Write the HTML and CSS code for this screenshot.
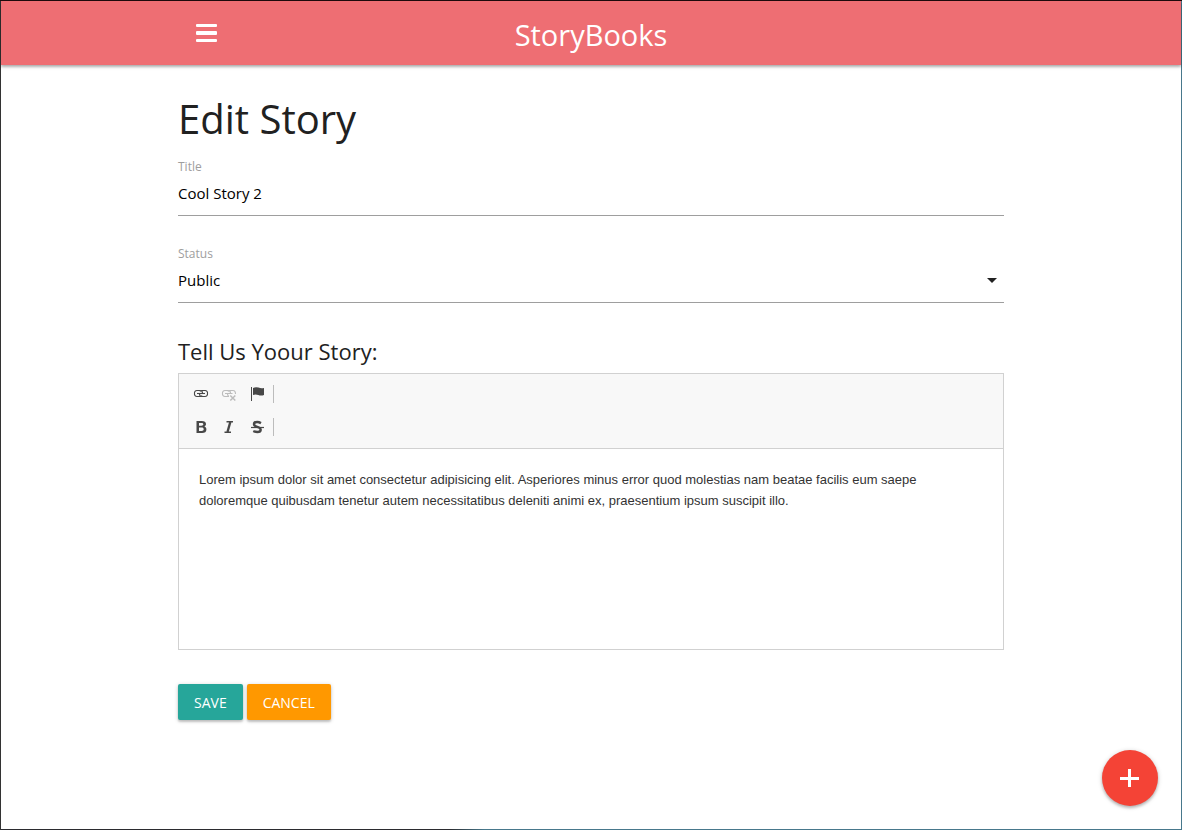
FILE: index.html
```html
<!DOCTYPE html>
<html lang="en">
<head>
<meta charset="utf-8">
<meta name="viewport" content="width=device-width, initial-scale=1">
<title>StoryBooks</title>
<link rel="stylesheet" href="styles.css">
</head>
<body>
<div class="window">
  <header class="navbar">
    <nav class="container navbar-inner">
      <button class="menu-button" type="button" aria-label="Menu">
        <svg width="21" height="18" viewBox="0 0 21 18" fill="currentColor"><rect width="21" height="3" rx="1"/><rect y="7" width="21" height="4" rx="1"/><rect y="15" width="21" height="3" rx="1"/></svg>
      </button>
      <a class="brand" href="#">StoryBooks</a>
    </nav>
  </header>
  <main class="container content">
    <h1 class="page-title">Edit Story</h1>
    <form>
      <div class="field">
        <label class="field-label" for="title">Title</label>
        <input class="field-control" id="title" type="text" value="Cool Story 2">
      </div>
      <div class="field">
        <label class="field-label" for="status">Status</label>
        <div class="select-wrap">
          <select class="field-control" id="status">
            <option selected>Public</option>
            <option>Private</option>
            <option>Unpublished</option>
          </select>
          <svg class="caret" width="10" height="5" viewBox="0 0 10 5" fill="currentColor"><path d="M0 0h10L5 5z"/></svg>
        </div>
      </div>
      <h2 class="section-title" id="story-heading">Tell Us Yoour Story:</h2>
      <div class="editor">
        <div class="toolbar">
          <div class="toolbar-row">
            <button class="tool" type="button" aria-label="Link">
              <svg width="16" height="16" viewBox="0 0 16 16" fill="none" stroke="currentColor" stroke-width="1.1"><path d="M9 9.500q-.4 1-2 1H4a2.500 2.500 0 0 1-2.500-3A2.500 2.500 0 0 1 4 4.500h3q2.500 0 2.500 2.500M7 5.500q.4-1 2-1h3a2.500 2.500 0 0 1 2.500 3 2.500 2.500 0 0 1-2.500 3H9q-2.500 0-2.500-2.500"/><path d="M4 7.500h8"/></svg>
            </button>
            <button class="tool" type="button" aria-label="Unlink" disabled>
              <svg width="16" height="16" viewBox="0 0 16 16" fill="none" stroke="currentColor" stroke-width="1.100"><path d="M8 10.500H4a2.500 2.500 0 0 1-2.500-3A2.500 2.500 0 0 1 4 4.500h3q2.500 0 2.500 2.500M7 5.500q.4-1 2-1h3q2.500 0 2.500 3.500M6.500 8q.2 2 1.500 2.300M4 7.500h7.500"/><path d="M9.300 9.500l5 5M14.300 9.500l-5 5" stroke-width="1.500"/></svg>
            </button>
            <button class="tool" type="button" aria-label="Anchor">
              <svg width="16" height="16" viewBox="0 0 16 16" fill="currentColor"><path d="M2 1h1v14H2zM4 2q3-1.500 5.500-.4T15 2v7q-3 1-5.700 0T4 9z"/></svg>
            </button>
            <span class="separator"></span>
          </div>
          <div class="toolbar-row">
            <button class="tool" type="button" aria-label="Bold">
              <svg width="16" height="16" viewBox="0 0 16 16" fill="currentColor" fill-rule="evenodd"><path d="M3.500 2h5.200c2.800 0 4.300 1 4.300 3 0 1.300-.7 2.200-1.900 2.500v.1c1.500.3 2.300 1.300 2.300 2.800 0 2.200-1.600 3.600-4.300 3.600H3.500zM6 4v2.700h2.300c1.400 0 2-.4 2-1.400S9.700 4 8.300 4zM6 8.600V12h2.600c1.400 0 2.100-.6 2.100-1.700s-.7-1.700-2.200-1.700z"/></svg>
            </button>
            <button class="tool" type="button" aria-label="Italic">
              <svg width="16" height="16" viewBox="0 0 16 16" fill="none" stroke="currentColor"><path d="M5.500 2.800h6.500M3.500 13.200H10" stroke-width="1.500"/><path d="M9.300 3L6.500 13" stroke-width="2.400"/></svg>
            </button>
            <button class="tool" type="button" aria-label="Strikethrough">
              <svg width="16" height="16" viewBox="0 0 16 16" fill="none" stroke="currentColor"><path d="M12 4.100Q10 3 8.200 3 5 3 5 5.200 5 7 8.300 7.800T11.700 10.700Q11.700 13 8.300 13 6.200 13 4.300 12" stroke-width="2.400"/><path d="M2 8.500h13" stroke-width="1.200"/></svg>
            </button>
            <span class="separator"></span>
          </div>
        </div>
        <div class="editor-body" contenteditable="true" role="textbox" aria-multiline="true" aria-labelledby="story-heading" spellcheck="false">Lorem ipsum dolor sit amet consectetur adipisicing elit. Asperiores minus error quod molestias nam beatae facilis eum saepe doloremque quibusdam tenetur autem necessitatibus deleniti animi ex, praesentium ipsum suscipit illo.</div>
      </div>
      <div class="actions">
        <button class="btn btn-save" type="submit">SAVE</button>
        <a class="btn btn-cancel" href="#">CANCEL</a>
      </div>
    </form>
  </main>
  <button class="fab" type="button" aria-label="Add story">
    <svg width="20" height="20" viewBox="0 0 20 20" fill="currentColor"><path d="M8 1h3v8h8v3h-8v7H8v-7H0V9h8z"/></svg>
  </button>
</div>
</body>
</html>
```
FILE: styles.css
```css
* {
  box-sizing: border-box;
}

body {
  margin: 0;
  background: #fff;
  color: #212121;
  font-family: "Segoe UI", "Open Sans", "Noto Sans", sans-serif;
  font-size: 15px;
  line-height: 24px;
}

.window {
  min-height: 100vh;
  padding: 1px;
  background:
    linear-gradient(#200a0c, #200a0c) top / 100% 1px no-repeat,
    linear-gradient(#47788c, #47788c) right / 1px 100% no-repeat,
    linear-gradient(#333, #333) left / 1px 100% no-repeat,
    linear-gradient(to right, #2b2b2f 38%, #47788c 41%) bottom / 100% 1px no-repeat;
}

.container {
  width: 70%;
  margin: 0 auto;
}

.navbar {
  background: #ee6e73;
  color: #fff;
  box-shadow: 0 2px 2px rgba(0, 0, 0, 0.14), 0 1px 4px rgba(0, 0, 0, 0.3);
}

.navbar-inner {
  display: grid;
  grid-template-columns: 1fr auto 1fr;
  align-items: center;
  height: 64px;
}

.menu-button {
  display: flex;
  justify-self: start;
  padding: 0 18px;
  border: 0;
  background: none;
  color: inherit;
}

.brand {
  padding-top: 4px;
  color: inherit;
  font-size: 29px;
  line-height: 60px;
  text-decoration: none;
}

.content {
  padding-bottom: 40px;
}

.page-title {
  margin: 30px 0 16px;
  font-size: 40px;
  font-weight: 400;
  line-height: 48px;
}

.field {
  margin-bottom: 30px;
}

.field-label {
  display: block;
  color: #9e9e9e;
  font-size: 12px;
  line-height: 16px;
}

.field-control {
  display: block;
  width: 100%;
  height: 41px;
  padding: 0 0 5px;
  border: 0;
  border-bottom: 1px solid #9e9e9e;
  border-radius: 0;
  outline: 0;
  appearance: none;
  background: transparent;
  color: #000;
  font-family: inherit;
  font-size: 15px;
}

.select-wrap {
  position: relative;
}

.caret {
  position: absolute;
  top: 16px;
  right: 7px;
  pointer-events: none;
}

.section-title {
  margin: 33px 0 7px;
  font-size: 22px;
  font-weight: 400;
  line-height: 30px;
}

.editor {
  border: 1px solid #d1d1d1;
}

.toolbar {
  display: flex;
  flex-direction: column;
  gap: 5px;
  padding: 6px 8px 7px;
  border-bottom: 1px solid #d1d1d1;
  background: #f8f8f8;
}

.toolbar-row {
  display: flex;
  align-items: center;
  height: 28px;
}

.tool {
  display: flex;
  padding: 6px;
  border: 0;
  background: none;
  color: #484848;
}

.tool:disabled {
  color: #bcbcbc;
}

.separator {
  width: 1px;
  height: 18px;
  margin-left: 2px;
  background: #bcbcbc;
}

.editor-body {
  min-height: 200px;
  padding: 20px;
  outline: 0;
  color: #333;
  font-family: "Liberation Sans", Arial, sans-serif;
  font-size: 13px;
  line-height: 21px;
}

.actions {
  display: flex;
  gap: 4px;
  margin-top: 34px;
}

.btn {
  height: 36px;
  padding: 0 16px;
  border: 0;
  border-radius: 2px;
  box-shadow: 0 2px 2px rgba(0, 0, 0, 0.14), 0 1px 4px rgba(0, 0, 0, 0.2);
  color: #fff;
  font-family: inherit;
  font-size: 14px;
  line-height: 37px;
  text-decoration: none;
}

.btn-save {
  background: #26a69a;
}

.btn-cancel {
  background: #ff9800;
}

.fab {
  position: fixed;
  right: 24px;
  bottom: 24px;
  display: flex;
  align-items: center;
  justify-content: center;
  width: 56px;
  height: 56px;
  padding: 0;
  border: 0;
  border-radius: 50%;
  background: #f44336;
  box-shadow: 0 2px 3px rgba(0, 0, 0, 0.2), 0 1px 5px rgba(0, 0, 0, 0.2);
  color: #fff;
}
```
